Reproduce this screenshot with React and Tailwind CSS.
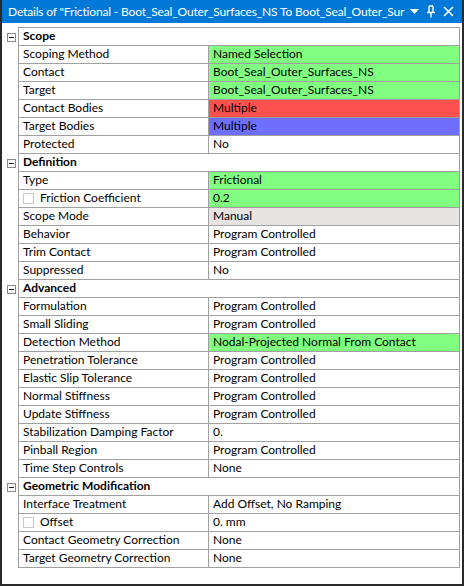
import React from "react";

const GREEN = "bg-[#80ff80]";

const sections = [
  {
    title: "Scope",
    rows: [
      ["Scoping Method", "Named Selection", GREEN],
      ["Contact", "Boot_Seal_Outer_Surfaces_NS", GREEN],
      ["Target", "Boot_Seal_Outer_Surfaces_NS", GREEN],
      ["Contact Bodies", "Multiple", "bg-[#ff5050]"],
      ["Target Bodies", "Multiple", "bg-[#6e6eff]"],
      ["Protected", "No"],
    ],
  },
  {
    title: "Definition",
    rows: [
      ["Type", "Frictional", GREEN],
      ["Friction Coefficient", "0.2", GREEN, true],
      ["Scope Mode", "Manual", "bg-[#e6e4e0]"],
      ["Behavior", "Program Controlled"],
      ["Trim Contact", "Program Controlled"],
      ["Suppressed", "No"],
    ],
  },
  {
    title: "Advanced",
    rows: [
      ["Formulation", "Program Controlled"],
      ["Small Sliding", "Program Controlled"],
      ["Detection Method", "Nodal-Projected Normal From Contact", GREEN],
      ["Penetration Tolerance", "Program Controlled"],
      ["Elastic Slip Tolerance", "Program Controlled"],
      ["Normal Stiffness", "Program Controlled"],
      ["Update Stiffness", "Program Controlled"],
      ["Stabilization Damping Factor", "0."],
      ["Pinball Region", "Program Controlled"],
      ["Time Step Controls", "None"],
    ],
  },
  {
    title: "Geometric Modification",
    rows: [
      ["Interface Treatment", "Add Offset, No Ramping"],
      ["Offset", "0. mm", "", true],
      ["Contact Geometry Correction", "None"],
      ["Target Geometry Correction", "None"],
    ],
  },
];

function MinusBox() {
  return (
    <div className="w-[9px] h-[9px] border border-[#8a8a8a] bg-white flex items-center justify-center">
      <div className="w-[5px] h-[1px] bg-[#222]" />
    </div>
  );
}

function PinIcon() {
  return (
    <svg width="8" height="13" viewBox="0 0 8 13" fill="none" stroke="white" strokeWidth="1.4">
      <path d="M2 1 V7.5 M6 1 V7.5 M2 1 H6 M0 7.5 H8 M4 7.5 V12.5" />
    </svg>
  );
}

export default function App() {
  return (
    <div
      className="w-[464px] h-[586px] flex flex-col bg-white border-x-2 border-b-2 border-[#2a2a2a] text-[12px] text-black"
      style={{ fontFamily: 'Lato, "Open Sans", sans-serif' }}
    >
      {/* TITLE BAR */}
      <div className="h-[23px] bg-[#0078d7] text-white flex items-center pl-[6px] pr-[8px] shrink-0">
        <div className="flex-1 min-w-0 whitespace-nowrap text-[12px] tracking-[-0.16px]">
          Details of "Frictional - Boot_Seal_Outer_Surfaces_NS To Boot_Seal_Outer_Sur
        </div>
        <div className="flex items-center gap-[8px] ml-[2px] shrink-0">
          <svg width="9" height="5" viewBox="0 0 9 5">
            <path d="M0 0 H9 L4.5 5 Z" fill="white" />
          </svg>
          <PinIcon />
          <svg width="11" height="11" viewBox="0 0 11 11" stroke="white" strokeWidth="1.6">
            <path d="M1 1 L10 10 M10 1 L1 10" />
          </svg>
        </div>
      </div>

      {/* GRID */}
      <div className="pt-[4px] pr-[2px]">
        <div className="ml-[16px] border-t border-[#a0a0a0]" />
        {sections.map((s) => (
          <div key={s.title}>
            <div className="flex h-[18px]">
              <div className="w-[16px] pl-[5px] flex items-center">
                <MinusBox />
              </div>
              <div className="flex-1 flex items-center border-x border-b border-[#a0a0a0] pl-[4px] pb-[1px] font-bold">
                {s.title}
              </div>
            </div>
            {s.rows.map(([label, value, bg, check]) => (
              <div key={label} className="flex h-[18px]">
                <div className="w-[16px]" />
                <div className="w-[190px] flex items-center border-l border-b border-[#a0a0a0] pl-[4px] pb-[1px] whitespace-nowrap">
                  {check && (
                    <div className="w-[11px] h-[11px] border border-[#c8c8c8] mr-[6px]" />
                  )}
                  {label}
                </div>
                <div
                  className={`flex-1 flex items-center border-x border-b border-[#a0a0a0] pl-[4px] pb-[1px] whitespace-nowrap ${bg || ""}`}
                >
                  {value}
                </div>
              </div>
            ))}
          </div>
        ))}
      </div>
    </div>
  );
}
